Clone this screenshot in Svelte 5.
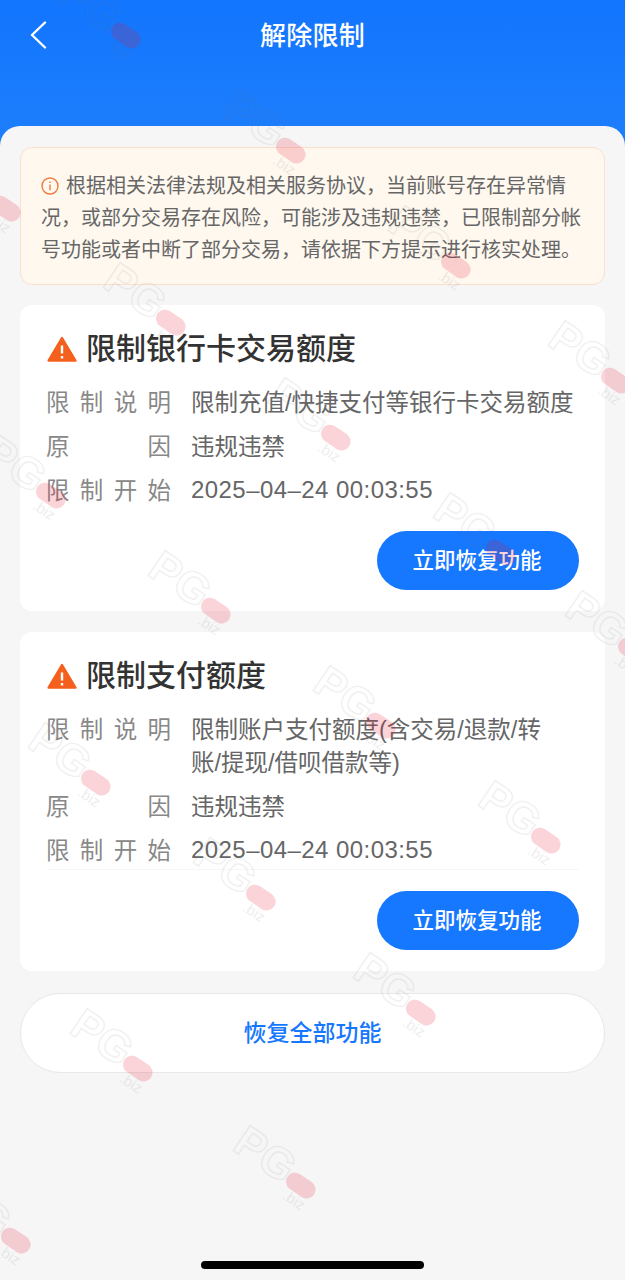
<script>
  const marks = [
    [125, 35], [290, 150], [455, 265], [615, 380],
    [5, 208], [170, 322], [335, 437], [500, 552], [632, 650],
    [50, 495], [215, 610], [380, 725], [545, 840],
    [95, 782], [260, 897], [420, 1012],
    [137, 1068], [300, 1185], [15, 1240]
  ].map(([x, y]) => ({ x, y }));
  const cards = [
    {
      title: '限制银行卡交易额度',
      desc: ['限制充值/快捷支付等银行卡交易额度'],
      ruled: false
    },
    {
      title: '限制支付额度',
      desc: ['限制账户支付额度(含交易/退款/转', '账/提现/借呗借款等)'],
      ruled: true
    }
  ];
</script>

<div class="page">
  <header class="hero">
    <button class="back" aria-label="返回">
      <svg width="18" height="28" viewBox="0 0 18 28" fill="none">
        <path d="M16 1.5 3 14l13 12.5" stroke="#fff" stroke-width="2.4" stroke-linecap="round" stroke-linejoin="round" />
      </svg>
    </button>
    <h1>解除限制</h1>
  </header>

  <main class="sheet">
    <div class="notice">
      <svg class="info" width="18" height="18" viewBox="0 0 18 18" fill="none">
        <circle cx="9" cy="9" r="8" stroke="#ef7b3c" stroke-width="1.4" />
        <path d="M9 7.6v5.6M9 4.5v1.6" stroke="#ef7b3c" stroke-width="1.4" />
      </svg>根据相关法律法规及相关服务协议，当前账号存在异常情况，或部分交易存在风险，可能涉及违规违禁，已限制部分帐号功能或者中断了部分交易，请依据下方提示进行核实处理。
    </div>

    {#each cards as card}
      <section class="card">
        <h2>
          <svg width="30" height="26" viewBox="0 0 30 26">
            <path d="M15 2 28.4 24.6H1.6Z" fill="#f4601d" stroke="#f4601d" stroke-width="2.4" stroke-linejoin="round" />
            <path d="M15 9.5v8M15 20v2.4" stroke="#fff" stroke-width="2.4" />
          </svg>
          {card.title}
        </h2>
        <dl>
          <div class="row"><dt><span>限</span><span>制</span><span>说</span><span>明</span></dt><dd>{#each card.desc as line}<span class="line">{line}</span>{/each}</dd></div>
          <div class="row"><dt><span>原</span><span>因</span></dt><dd>违规违禁</dd></div>
          <div class="row"><dt><span>限</span><span>制</span><span>开</span><span>始</span></dt><dd class="num">2025–04–24 00:03:55</dd></div>
        </dl>
        <div class="actions" class:ruled={card.ruled}>
          <button class="primary">立即恢复功能</button>
        </div>
      </section>
    {/each}

    <button class="restore">恢复全部功能</button>
  </main>

  <div class="home"></div>

  <div class="marks" aria-hidden="true">
    {#each marks as m}
      <div class="mark" style="left:{m.x}px;top:{m.y}px">
        <span class="pg">PG</span><span class="biz">.biz</span><i></i>
      </div>
    {/each}
  </div>
</div>

<style>
  :global(body) {
    margin: 0;
    background: #f6f6f6;
  }
  .page {
    position: relative;
    width: 625px;
    height: 1280px;
    overflow: hidden;
    background: #f6f6f6;
    font-family: "Liberation Sans", "Noto Sans CJK SC", sans-serif;
  }
  .hero {
    height: 170px;
    background: linear-gradient(180deg, #1275fe 0%, #2080fb 100%);
    display: flex;
    justify-content: center;
    box-sizing: border-box;
    padding-top: 15px;
    position: relative;
  }
  .hero h1 {
    margin: 0;
    color: #fff;
    font-size: 26px;
    line-height: 42px;
    font-weight: 500;
    letter-spacing: 0.3px;
  }
  .back {
    position: absolute;
    left: 29px;
    top: 21px;
    padding: 0;
    border: 0;
    background: none;
    line-height: 0;
  }
  .sheet {
    margin-top: -44px;
    position: relative;
    background: #f6f6f6;
    border-radius: 20px 20px 0 0;
    padding: 21px 20px 0;
    display: flex;
    flex-direction: column;
  }
  .notice {
    height: 138px;
    box-sizing: border-box;
    border: 1px solid #fadfcc;
    border-radius: 12px;
    background: #fef8ef;
    padding: 22px 20px 0;
    color: #666;
    font-size: 20px;
    line-height: 32px;
  }
  .info {
    vertical-align: -2px;
    margin-right: 7px;
  }
  .card {
    margin-top: 21px;
    background: #fff;
    border-radius: 12px;
    padding: 22px 26px 21px 27px;
  }
  .notice + .card {
    margin-top: 20px;
  }
  .card h2 {
    margin: 0;
    display: flex;
    align-items: center;
    gap: 9px;
    color: #333;
    font-size: 30px;
    line-height: 44px;
    font-weight: 500;
  }
  dl {
    margin: 16px 0 0;
    display: flex;
    flex-direction: column;
  }
  .row {
    display: flex;
    padding-bottom: 11px;
    font-size: 23.5px;
    line-height: 33px;
  }
  dt {
    flex: 0 0 125px;
    margin-left: -1px;
    display: flex;
    justify-content: space-between;
    color: #888;
    margin-right: 20px;
  }
  dd {
    margin: 0;
    color: #666;
  }
  .line {
    display: block;
  }
  .num {
    font-size: 24px;
    letter-spacing: 0.44px;
    margin-top: -2px;
  }
  .actions {
    display: flex;
    justify-content: flex-end;
    margin-top: 12px;
  }
  .ruled {
    border-top: 1px solid #f6f6f6;
    margin-top: -10px;
    padding-top: 21px;
  }
  .primary {
    width: 202px;
    height: 59px;
    border: 0;
    border-radius: 30px;
    background: #1677ff;
    color: #fff;
    font: 500 21.5px/54px "Noto Sans CJK SC", sans-serif;
    padding: 0 2px 4px 0;
  }
  .restore {
    margin-top: 22px;
    height: 80px;
    border: 1px solid #e8e8e8;
    border-radius: 40px;
    background: #fff;
    color: #1677ff;
    font: 500 23px/74px "Noto Sans CJK SC", sans-serif;
    padding: 0 0 4px;
  }
  .home {
    position: absolute;
    left: 201px;
    top: 1261px;
    width: 223px;
    height: 8px;
    border-radius: 4px;
    background: #000;
  }
  .marks {
    position: absolute;
    inset: 0;
    pointer-events: none;
  }
  .mark {
    position: absolute;
    width: 0;
    height: 0;
    transform: rotate(34deg);
    white-space: nowrap;
  }
  .pg {
    position: absolute;
    right: 14px;
    top: -28px;
    font: 700 44px/44px "Liberation Sans", sans-serif;
    color: transparent;
    -webkit-text-stroke: 1.4px #777;
    opacity: 0.1;
  }
  .biz {
    position: absolute;
    left: -8px;
    top: 8px;
    font: 400 15px/16px "Liberation Sans", sans-serif;
    color: #777;
    opacity: 0.12;
  }
  .mark i {
    position: absolute;
    left: -15px;
    top: -9px;
    width: 32px;
    height: 18px;
    border-radius: 9px;
    background: #e8112d;
    opacity: 0.18;
  }
</style>
